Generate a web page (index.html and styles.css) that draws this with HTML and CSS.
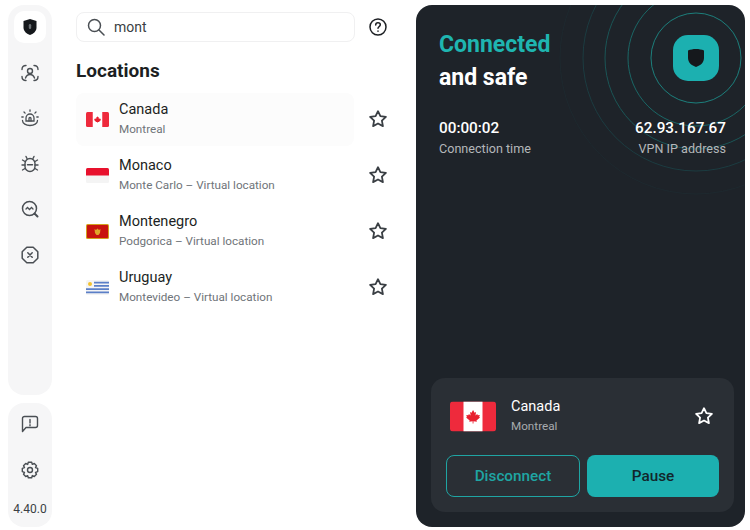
FILE: index.html
```html
<!DOCTYPE html>
<html lang="en">
<head>
  <meta charset="UTF-8">
  <title>VPN</title>
  <link rel="stylesheet" href="styles.css">
</head>
<body>
  <svg class="defs" width="0" height="0">
    <symbol id="star" viewBox="0 0 20 20">
      <path d="M10 2.200l2.400 5 5.500.7-4 3.800 1 5.400L10 14.500l-4.900 2.600 1-5.400-4-3.800 5.500-.7z" fill="none" stroke="currentColor" stroke-width="1.800" stroke-linejoin="round"/>
    </symbol>
    <symbol id="canada" viewBox="0 0 46 30">
      <rect width="46" height="30" rx="3" fill="#ee2a3c"/>
      <rect x="13.500" width="19" height="30" fill="#fff"/>
      <path transform="translate(3.500 2.500) scale(.85)" d="M23 7l1.800 3.200 1.700-.8-.6 4.200 2-1.800.6 1.500 2.500-.4-.8 2.500 1 .6-4.200 3.300.5 1.500-4-.5V23h-1v-2.700l-4 .5.500-1.500-4.200-3.300 1-.6-.8-2.500 2.500.4.600-1.500 2 1.800-.6-4.200 1.700.8z" fill="#e8202f"/>
    </symbol>
  </svg>

  <nav class="sidebar">
    <div class="side-group side-main">
      <a class="side-btn active">
        <svg width="18" height="18" viewBox="0 0 18 18"><path d="M9 1l6.500 2v6.500C15.500 13.500 12 16 9 17c-3-1-6.500-3.500-6.500-7.500V3z" fill="#15181c"/><rect x="7.800" y="6" width="2.400" height="5" rx="1.200" fill="#6b7075"/></svg>
      </a>
      <a class="side-btn">
        <svg width="18" height="18" viewBox="0 0 18 18" fill="none" stroke="#4a4f54" stroke-width="1.400" stroke-linecap="round"><path d="M1 5.500C1 3 2.500 1.500 5 1.500M13 1.500c2.500 0 4 1.500 4 4M17 12.500c0 2.500-1.500 4-4 4M5 16.500c-2.500 0-4-1.500-4-4"/><circle cx="9" cy="7" r="2.500"/><path d="M4.500 14c.8-2.300 2.500-3.500 4.500-3.500s3.700 1.200 4.500 3.500"/></svg>
      </a>
      <a class="side-btn">
        <svg width="18" height="18" viewBox="0 0 18 18" fill="none" stroke="#4a4f54" stroke-width="1.300" stroke-linecap="round"><path d="M5 12V9a4 4 0 0 1 8 0v3z"/><path d="M8 12V9.500a1 1 0 0 1 2 0V12"/><path d="M1.500 11.500C1.500 14.500 5 16.500 9 16.500s7.500-2 7.500-5"/><path d="M9 .8v1.500M3 3l1.100 1.100M15 3l-1.100 1.100M.8 8h1.400M15.800 8h1.400"/></svg>
      </a>
      <a class="side-btn">
        <svg width="18" height="18" viewBox="0 0 18 18" fill="none" stroke="#4a4f54" stroke-width="1.400" stroke-linecap="round"><rect x="4" y="3.500" width="10" height="13" rx="5"/><path d="M6.500 9.800h5M6 3.500L5 1.500M12 3.500l1-2M4 6.500L1.500 5M14 6.500l2.500-1.500M4 10H1M14 10h3M4 13.500l-2.500 1.500M14 13.500l2.500 1.500"/></svg>
      </a>
      <a class="side-btn">
        <svg width="18" height="18" viewBox="0 0 18 18" fill="none" stroke="#4a4f54" stroke-width="1.500" stroke-linecap="round"><circle cx="8.500" cy="8.500" r="7"/><path d="M13.500 13.500l3 3" stroke-width="2"/><path d="M5 9l1.500-1.500L8.500 9.500 10.500 7.500 12 9" stroke-width="1.300"/></svg>
      </a>
      <a class="side-btn">
        <svg width="18" height="18" viewBox="0 0 18 18" fill="none" stroke="#4a4f54" stroke-width="1.500" stroke-linecap="round" stroke-linejoin="round"><path d="M5.800 1.200h6.400l4.600 4.600v6.400l-4.600 4.600H5.800l-4.600-4.600V5.800z"/><path d="M6.800 6.800l4.400 4.400M11.200 6.800l-4.400 4.400"/></svg>
      </a>
    </div>
    <div class="side-group side-bottom">
      <a class="side-btn">
        <svg width="18" height="18" viewBox="0 0 18 18" fill="none" stroke="#4a4f54" stroke-width="1.400" stroke-linejoin="round"><path d="M1.500 3.500a2 2 0 0 1 2-2h11a2 2 0 0 1 2 2v7a2 2 0 0 1-2 2H5l-3.500 4z"/><path d="M9 4.500v3.500M9 9.800v.9" stroke-linecap="round"/></svg>
      </a>
      <a class="side-btn">
        <svg width="18" height="18" viewBox="0 0 18 18" fill="none" stroke="#4a4f54" stroke-width="1.400" stroke-linejoin="round"><path d="M7.300 1.200h3.400l.6 2.200 2-.9 2.200 2.200-1 1.900 2.200.8v3.200l-2.200.8 1 1.900-2.200 2.200-2-.9-.6 2.200H7.300l-.6-2.200-2 .9-2.200-2.200 1-1.900-2.200-.8V7.400l2.200-.8-1-1.900 2.200-2.200 2 .9z"/><circle cx="9" cy="9" r="2.500"/></svg>
      </a>
      <span class="version">4.40.0</span>
    </div>
  </nav>

  <main class="locations">
    <div class="search-row">
      <div class="search">
        <svg width="18" height="18" viewBox="0 0 18 18" fill="none" stroke="#4a4f54" stroke-width="1.500" stroke-linecap="round"><circle cx="7.500" cy="7.500" r="6"/><path d="M12 12l5 5"/></svg>
        <span>mont</span>
      </div>
      <svg class="help" width="18" height="18" viewBox="0 0 18 18" fill="none" stroke="#1c1f23" stroke-width="1.500" stroke-linecap="round"><circle cx="9" cy="9" r="8"/><path d="M6.700 7c0-1.400 1-2.200 2.300-2.200s2.300.8 2.300 2c0 1.800-2.300 1.700-2.300 3.500"/><path d="M9 12.900v.3"/></svg>
    </div>

    <h2>Locations</h2>

    <ul class="loc-list">
      <li class="loc hover">
        <svg class="flag" viewBox="0 0 46 30"><use href="#canada"/></svg>
        <div class="loc-text"><b>Canada</b><small>Montreal</small></div>
        <svg class="star" width="20" height="20"><use href="#star"/></svg>
      </li>
      <li class="loc">
        <svg class="flag" viewBox="0 0 46 30"><rect width="46" height="30" rx="3" fill="#f4f4f4"/><path d="M0 15V3a3 3 0 0 1 3-3h40a3 3 0 0 1 3 3v12z" fill="#e8112d"/></svg>
        <div class="loc-text"><b>Monaco</b><small>Monte Carlo – Virtual location</small></div>
        <svg class="star" width="20" height="20"><use href="#star"/></svg>
      </li>
      <li class="loc">
        <svg class="flag" viewBox="0 0 46 30"><rect width="46" height="30" rx="3" fill="#d3a01e"/><rect x="2" y="2" width="42" height="26" rx="1.500" fill="#c8140f"/><path d="M17 10l3 2 3-3 3 3 3-2-1 8-3 4h-4l-3-4z" fill="#e0a52a"/></svg>
        <div class="loc-text"><b>Montenegro</b><small>Podgorica – Virtual location</small></div>
        <svg class="star" width="20" height="20"><use href="#star"/></svg>
      </li>
      <li class="loc">
        <svg class="flag" viewBox="0 0 46 30"><rect width="46" height="30" rx="3" fill="#f4f4f4"/><path d="M16 3.500h30v3.500H16zM16 10h30v3.500H16zM0 16.500h46V20H0zM0 23h46v3.500H0z" fill="#5b7fc7"/><circle cx="8" cy="8" r="4" fill="#f2c230"/></svg>
        <div class="loc-text"><b>Uruguay</b><small>Montevideo – Virtual location</small></div>
        <svg class="star" width="20" height="20"><use href="#star"/></svg>
      </li>
    </ul>
  </main>

  <aside class="panel">
    <div class="rings">
      <i class="ring r1"></i><i class="ring r2"></i><i class="ring r3"></i><i class="ring r4"></i><i class="ring r5"></i>
    </div>
    <div class="badge">
      <svg width="16" height="18" viewBox="0 0 16 18"><path d="M0 1.500C2.500.5 5 0 8 0s5.500.5 8 1.500V9c0 4.500-3.500 7.500-8 9-4.500-1.500-8-4.500-8-9z" fill="#15181c"/></svg>
    </div>

    <h1><span class="teal">Connected</span><br>and safe</h1>

    <div class="stats">
      <div><b>00:00:02</b><small>Connection time</small></div>
      <div class="right"><b>62.93.167.67</b><small>VPN IP address</small></div>
    </div>

    <div class="card">
      <div class="card-top">
        <svg class="flag-big" viewBox="0 0 46 30"><use href="#canada"/></svg>
        <div class="loc-text"><b>Canada</b><small>Montreal</small></div>
        <svg class="star white" width="20" height="20"><use href="#star"/></svg>
      </div>
      <div class="actions">
        <button class="btn outline">Disconnect</button>
        <button class="btn solid">Pause</button>
      </div>
    </div>
  </aside>
</body>
</html>
```

FILE: styles.css
```css
* {
  box-sizing: border-box;
}

html, body {
  height: 100%;
}

body {
  margin: 0;
  display: flex;
  padding: 5px 5px 3px 8px;
  font-family: Roboto, sans-serif;
  background-color: #fff;
  color: #1c1f23;
  overflow: hidden;
}

.defs {
  position: absolute;
}

/* left rail */
.sidebar {
  width: 44px;
  flex-shrink: 0;
  display: flex;
  flex-direction: column;
  gap: 8px;
}

.side-group {
  background-color: #f6f6f7;
  border-radius: 16px;
  display: flex;
  flex-direction: column;
  align-items: center;
}

.side-main {
  flex: 1;
  padding-top: 6px;
  gap: 13.500px;
}

.side-bottom {
  height: 124px;
  padding-top: 5px;
  gap: 14px;
}

.side-btn {
  width: 32px;
  height: 32px;
  border-radius: 10px;
  display: flex;
  align-items: center;
  justify-content: center;
}

.side-btn.active {
  background-color: #fff;
}

.version {
  font-size: 12px;
  color: #3a3f44;
  margin-top: 2px;
}

/* location list */
.locations {
  width: 280px;
  margin-left: 24px;
  margin-right: 60px;
  flex-shrink: 0;
}

.search-row {
  display: flex;
  align-items: center;
  margin-top: 7px;
  width: 312px;
}

.search {
  width: 279px;
  height: 30px;
  border: 1px solid #f0f0f1;
  border-radius: 8px;
  display: flex;
  align-items: center;
  gap: 9px;
  padding-left: 10px;
  font-size: 14px;
  color: #3a3f44;
}

.help {
  margin-left: 14px;
}

h2 {
  font-size: 19px;
  font-weight: 700;
  line-height: 24px;
  margin: 17px 0 10px;
}

.loc-list {
  list-style: none;
  margin: 0;
  padding: 0;
  width: 312px;
}

.loc {
  width: 278px;
  height: 53px;
  margin-bottom: 3px;
  display: flex;
  align-items: center;
  padding-left: 10px;
  border-radius: 8px;
  position: relative;
}

.loc.hover {
  background-color: #fcfcfc;
}

.flag {
  width: 23px;
  height: 15px;
  flex-shrink: 0;
  margin-right: 10px;
}

.loc-text {
  padding-bottom: 1px;
}

.loc-text b {
  display: block;
  font-weight: 400;
  font-size: 14.500px;
  line-height: 20px;
}

.loc-text small {
  display: block;
  font-size: 11.700px;
  line-height: 18px;
  color: #6f7479;
}

.star {
  position: absolute;
  left: 292px;
  top: 16px;
  color: #3a3f44;
}

/* connection panel */
.panel {
  width: 329px;
  height: 522px;
  background-color: #1e2329;
  border-radius: 16px;
  position: relative;
  overflow: hidden;
  color: #fff;
  padding: 23px 23px 15px;
  display: flex;
  flex-direction: column;
}

.rings {
  position: absolute;
  left: 280px;
  top: 53px;
}

.ring {
  position: absolute;
  border: 1px solid #1d7f7c;
  border-radius: 50%;
  transform: translate(-50%, -50%);
}

.r1 { width: 91px; height: 91px; }
.r2 { width: 137px; height: 137px; border-color: #1b6766; }
.r3 { width: 183px; height: 183px; border-color: #1b5556; }
.r4 { width: 227px; height: 227px; border-color: #1c3c41; }
.r5 { width: 273px; height: 273px; border-color: #1e292f; }

.badge {
  position: absolute;
  left: 257px;
  top: 30px;
  width: 46px;
  height: 46px;
  border-radius: 15px;
  background-color: #1cb0b0;
  display: flex;
  align-items: center;
  justify-content: center;
}

h1 {
  margin: 0;
  font-size: 23px;
  font-weight: 700;
  line-height: 33px;
  position: relative;
}

.teal {
  color: #1fb5b0;
}

.stats {
  display: flex;
  justify-content: space-between;
  margin-top: 24px;
  margin-right: -4px;
  position: relative;
}

.stats b {
  display: block;
  font-size: 15.300px;
  font-weight: 500;
  line-height: 20px;
}

.stats small {
  display: block;
  font-size: 12.600px;
  line-height: 18px;
  margin-top: 2px;
  color: #b4b7ba;
}

.stats .right {
  text-align: right;
}

.card {
  margin-top: auto;
  margin-left: -8px;
  margin-right: -12px;
  height: 134px;
  background-color: #2a2f35;
  border-radius: 14px;
  padding: 7px 15px 15px;
  position: relative;
}

.card-top {
  height: 62px;
  display: flex;
  align-items: center;
  padding-left: 4px;
  position: relative;
}

.flag-big {
  width: 46px;
  height: 31px;
  margin-right: 15px;
}

.card .loc-text b {
  font-size: 14.500px;
  line-height: 20px;
}

.card .loc-text small {
  color: #a7abae;
}

.star.white {
  left: 248px;
  top: 21px;
  color: #fff;
}

.actions {
  display: flex;
  gap: 7px;
  margin-top: 8px;
}

.btn {
  flex: 1;
  height: 42px;
  border-radius: 8px;
  font-family: Roboto, sans-serif;
  font-size: 15.300px;
  font-weight: 500;
}

.btn.outline {
  background-color: transparent;
  border: 1px solid #1fa5a3;
  color: #1fa5a3;
}

.btn.solid {
  background-color: #1cb0b0;
  border: none;
  color: #12262b;
}
```
